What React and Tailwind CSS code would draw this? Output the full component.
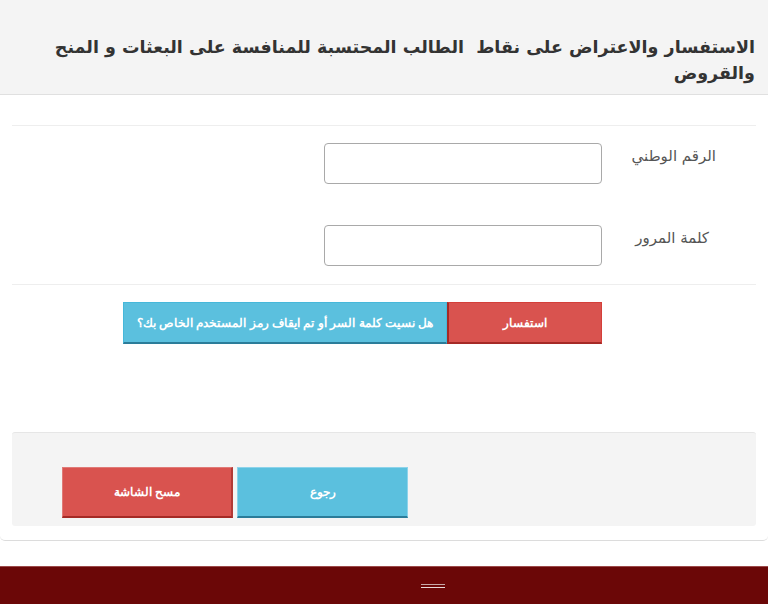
import React from "react";

export default function App() {
  return (
    <div className="w-full min-h-[604px] bg-white flex flex-col">
      <div className="border-b border-[#dcdcdc] rounded-b-[5px] h-[541px] flex flex-col">
        <div
          dir="rtl"
          className="h-[95px] bg-[#f4f4f4] border-b border-[#e0e0e0] pl-[12px] pr-[13px] pt-[34px] text-[#333] font-bold text-[17.5px] leading-[26px] [font-family:'DejaVu_Sans',sans-serif]"
        >
          الاستفسار والاعتراض على نقاط&nbsp; الطالب المحتسبة للمنافسة على البعثات و المنح والقروض
        </div>
        <div dir="rtl" className="pl-[12px] pr-[12px] pt-[30px] flex flex-col">
          <div className="border-t border-[#eeeeee]" />
          <div className="flex flex-row items-start mt-[17px]">
            <div className="w-[154px] pr-[40px] pt-[2px] text-[15px] text-[#555] [font-family:'DejaVu_Sans',sans-serif]">
              الرقم الوطني
            </div>
            <div className="w-[278px] h-[41px] border border-[#a9a9a9] rounded-[4px] bg-white" />
          </div>
          <div className="flex flex-row items-start mt-[41px]">
            <div className="w-[154px] pr-[47px] pt-[2px] text-[15px] text-[#555] [font-family:'DejaVu_Sans',sans-serif]">
              كلمة المرور
            </div>
            <div className="w-[278px] h-[41px] border border-[#a9a9a9] rounded-[4px] bg-white" />
          </div>
          <div className="border-t border-[#eeeeee] mt-[18px]" />
          <div className="flex flex-row mt-[17px] pr-[154px] [font-family:'Liberation_Sans',Arial,sans-serif]">
            <div className="w-[155px] h-[42px] bg-[#d9534f] border border-[#d43f3a] border-b-[2px] border-b-[#a52a26] border-l-[2px] border-l-[#a52a26] flex items-center justify-center text-white font-bold text-[12px]">
              استفسار
            </div>
            <div className="w-[324px] h-[42px] bg-[#5bc0de] border border-[#46b8da] border-b-[2px] border-b-[#2b7c99] flex items-center justify-center text-white font-bold text-[12px]">
              هل نسيت كلمة السر أو تم ايقاف رمز المستخدم الخاص بك؟
            </div>
          </div>
        </div>
        <div className="mx-[12px] mt-[88px] h-[94px] bg-[#f4f4f4] border-t border-[#e6e6e6] rounded-[3px] pl-[50px] pt-[34px] flex flex-row gap-[4px] [font-family:'Liberation_Sans',Arial,sans-serif]">
          <div dir="rtl" className="w-[171px] h-[51px] bg-[#d9534f] border border-[#e07a77] border-b-[2px] border-b-[#a52a26] border-r-[2px] border-r-[#b33a36] flex items-center justify-center text-white font-bold text-[12px]">
            مسح الشاشة
          </div>
          <div dir="rtl" className="w-[171px] h-[51px] bg-[#5bc0de] border border-[#8dd3ea] border-b-[2px] border-b-[#2b7c99] flex items-center justify-center text-white font-bold text-[12px]">
            رجوع
          </div>
        </div>
      </div>
      <div className="mt-[25px] h-[38px] bg-[#6b0707] border-t border-[#9c4a4a] flex items-center pl-[421px]">
        <div className="flex flex-col gap-[2px] w-[24px]">
          <div className="h-[1px] bg-[#c8a8a8]" />
          <div className="h-[1px] bg-[#e8d8d8]" />
        </div>
      </div>
    </div>
  );
}
